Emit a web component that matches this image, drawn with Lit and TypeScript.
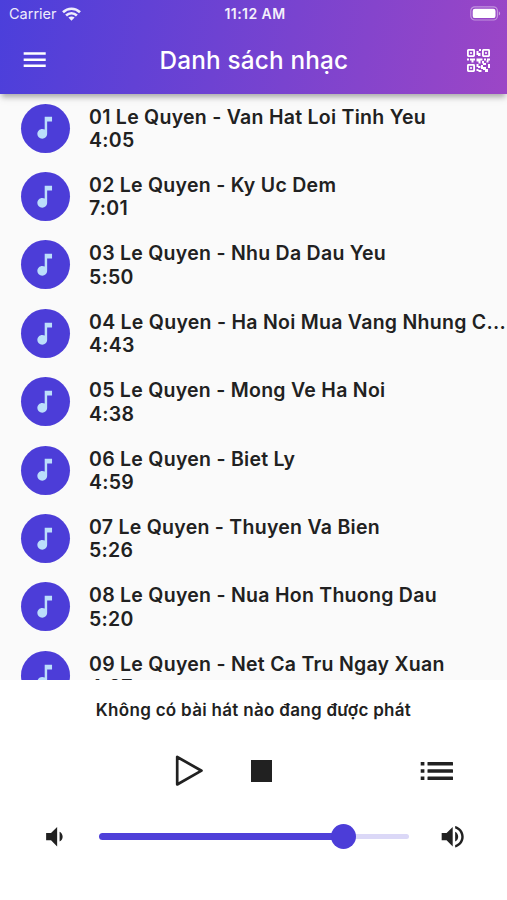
import { LitElement, html, css, svg } from "lit";
import { customElement, property, state } from "lit/decorators.js";

interface Song {
  title: string;
  time: string;
}

const SONGS: Song[] = [
  { title: "01 Le Quyen - Van Hat Loi Tinh Yeu", time: "4:05" },
  { title: "02 Le Quyen - Ky Uc Dem", time: "7:01" },
  { title: "03 Le Quyen - Nhu Da Dau Yeu", time: "5:50" },
  { title: "04 Le Quyen - Ha Noi Mua Vang Nhung C...", time: "4:43" },
  { title: "05 Le Quyen - Mong Ve Ha Noi", time: "4:38" },
  { title: "06 Le Quyen - Biet Ly", time: "4:59" },
  { title: "07 Le Quyen - Thuyen Va Bien", time: "5:26" },
  { title: "08 Le Quyen - Nua Hon Thuong Dau", time: "5:20" },
  { title: "09 Le Quyen - Net Ca Tru Ngay Xuan", time: "4:27" },
];

const PATHS = {
  menu: "M3 18h18v-2H3v2zm0-5h18v-2H3v2zm0-7v2h18V6H3z",
  note: "M12 3v10.55c-.59-.34-1.27-.55-2-.55-2.21 0-4 1.79-4 4s1.79 4 4 4 4-1.79 4-4V7h4V3h-6z",
  volumeDown: "M18.5 12c0-1.77-1.02-3.29-2.5-4.03v8.05c1.48-.73 2.5-2.25 2.5-4.02zM5 9v6h4l5 5V4L9 9H5z",
  volumeUp:
    "M3 9v6h4l5 5V4L7 9H3zm13.5 3c0-1.77-1.02-3.29-2.5-4.03v8.05c1.48-.73 2.5-2.25 2.5-4.02zM14 3.23v2.06c2.89.86 5 3.54 5 6.71s-2.11 5.85-5 6.71v2.06c4.01-.91 7-4.49 7-8.77s-2.99-7.86-7-8.77z",
};

const icon = (path: string) => html`<svg class="icon" viewBox="0 0 24 24"><path d=${path} /></svg>`;

const finder = (x: number, y: number) => svg`
  <rect x=${x + 0.9} y=${y + 0.9} width="6.2" height="6.2" rx=".5" fill="none" stroke="currentColor" stroke-width="1.8" />
  <rect x=${x + 3.2} y=${y + 3} width="1.6" height="2" fill="currentColor" />`;

@customElement("song-row")
export class SongRow extends LitElement {
  static styles = css`
    :host {
      display: flex;
      flex: none;
      align-items: center;
      height: 68.4px;
      padding-left: 20.5px;
      gap: 19.5px;
      box-sizing: border-box;
    }
    .avatar {
      flex: none;
      width: 49px;
      height: 49px;
      border-radius: 50%;
      background: #4c3dd8;
      display: grid;
      place-items: center;
    }
    .icon {
      width: 29.4px;
      height: 29.4px;
      fill: #bbdefb;
    }
    .text {
      font-size: 19.5px;
      line-height: 23.4px;
      font-weight: 640;
      letter-spacing: 0.27px;
      color: #212121;
      white-space: nowrap;
      padding-top: 1.6px;
    }
  `;
  @property({ attribute: false }) song!: Song;

  render() {
    return html`
      <div class="avatar">${icon(PATHS.note)}</div>
      <div class="text">
        <div>${this.song.title}</div>
        <div>${this.song.time}</div>
      </div>
    `;
  }
}

@customElement("app-root")
export class AppRoot extends LitElement {
  static styles = css`
    :host {
      display: flex;
      flex-direction: column;
      height: 900px;
      width: 507px;
      overflow: hidden;
      background: #fff;
      font-family: Inter, "Liberation Sans", sans-serif;
    }
    svg {
      display: block;
    }
    .icon {
      width: 29.4px;
      height: 29.4px;
      fill: currentColor;
    }
    .header {
      flex: none;
      height: 94px;
      box-sizing: border-box;
      color: #fff;
      background: linear-gradient(100.5deg, #4b3fdb, #9c46c6);
      box-shadow: 0 5px 5px -2px rgba(0, 0, 0, 0.24), 0 3px 9px rgba(0, 0, 0, 0.12);
      z-index: 1;
    }
    .status {
      height: 27px;
      display: grid;
      grid-template-columns: 1fr auto 1fr;
      align-items: center;
      padding: 0 6px 0 9px;
      font-size: 14.5px;
      line-height: 20px;
    }
    .carrier {
      display: flex;
      align-items: center;
      gap: 5.5px;
      opacity: 0.9;
    }
    .clock {
      font-weight: 600;
      font-size: 14px;
      letter-spacing: 0.45px;
      opacity: 0.92;
    }
    .battery {
      justify-self: end;
    }
    .bar {
      height: 66px;
      display: grid;
      grid-template-columns: 1fr auto 1fr;
      align-items: center;
      padding: 0 17.5px 0 20.3px;
    }
    .title {
      font-size: 24.3px;
      font-weight: 450;
      letter-spacing: 0.2px;
      margin-left: -2px;
    }
    .qr {
      justify-self: end;
    }
    .list {
      height: 586px;
      overflow: hidden;
      background: #fafafa;
      display: flex;
      flex-direction: column;
    }
    .player {
      flex: 1;
      background: #fff;
      color: #212121;
    }
    .now {
      height: 59px;
      line-height: 60.6px;
      text-align: center;
      font-size: 17px;
      font-weight: 620;
      letter-spacing: 0.3px;
    }
    .controls {
      height: 64px;
      display: flex;
      align-items: center;
      padding: 0 54px 0 173.5px;
    }
    .stop {
      width: 21.5px;
      height: 21.5px;
      background: #212121;
      margin-left: 47px;
    }
    .queue {
      margin-left: auto;
    }
    .volume {
      height: 67px;
      display: flex;
      align-items: center;
      padding: 0 39.5px 0 40px;
    }
    .slider {
      flex: 1;
      margin: 0 29.5px 0 29.6px;
      display: flex;
      align-items: center;
    }
    .filled {
      height: 7px;
      border-radius: 4px 0 0 4px;
      background: #4f40d9;
    }
    .thumb {
      flex: none;
      width: 25px;
      height: 25px;
      border-radius: 50%;
      background: #4c3dd8;
      margin: 0 -12.5px;
      z-index: 1;
    }
    .rest {
      flex: 1;
      height: 4.5px;
      border-radius: 0 3px 3px 0;
      background: #dbd8f7;
    }
  `;

  @state() private level = 79;

  render() {
    return html`
      <div class="header">
        <div class="status">
          <div class="carrier">
            <span>Carrier</span>
            <svg width="19" height="14" viewBox="0 0 19 14">
              <g fill="none" stroke="#fff" stroke-width="2.6">
                <path d="M1 5.2C5.8.5 13.2.5 18 5.2" />
                <path d="M4.1 8.5c3.1-3 7.7-3 10.8 0" />
              </g>
              <path d="M6.4 10.6c1.8-1.6 4.4-1.6 6.2 0L9.500 13.800z" fill="#fff" />
            </svg>
          </div>
          <div class="clock">11:12 AM</div>
          <svg class="battery" width="31" height="15" viewBox="0 0 31 15">
            <rect x=".8" y=".8" width="26.6" height="13.2" rx="4" fill="none" stroke="#fff" stroke-opacity=".42" stroke-width="1.2" />
            <rect x="2.7" y="2.7" width="22.8" height="9.4" rx="2.2" fill="#fff" />
            <path d="M28.8 5.2c1.8.8 1.8 3.6 0 4.4z" fill="#fff" fill-opacity=".5" />
          </svg>
        </div>
        <div class="bar">
          ${icon(PATHS.menu)}
          <div class="title">Danh sách nhạc</div>
          <svg class="qr" width="23" height="23" viewBox="0 0 23 23">
            ${finder(0, 0)}${finder(15, 0)}${finder(0, 15)}
            <path
              fill="currentColor"
              d="M12 0h2v2h-2zM9.5 2h2v2h2v3h-2.500v-1h-1.500zM0 9.500h2v2h-2zM3 9.500h5v2h-1.500v2h-2v-2h-1.500zM9.500 9.500h6v2h-2v3h-2v-2h-2zM17 9.500h2v2h-2zM20 9.500h3v2h-1.500v2h-2v-2h.5zM15 12h2v2h2v2h-3v-1.500h-1zM9.500 15h2v2h2v2h-2.500v-1h-1.500zM21 15h2v4h-2zM14 16h2v2h3v2h2v3h-3v-2h-2v-1h-2zM9.500 20h2v1h3v2h-3v-1h-2z"
            />
          </svg>
        </div>
      </div>
      <div class="list">${SONGS.map((s) => html`<song-row .song=${s}></song-row>`)}</div>
      <div class="player">
        <div class="now">Không có bài hát nào đang được phát</div>
        <div class="controls">
          <svg width="30" height="34" viewBox="0 0 30 34">
            <path d="M3.200 3v27.500L27.500 16.700z" fill="none" stroke="#212121" stroke-width="2.7" stroke-linejoin="round" />
          </svg>
          <div class="stop"></div>
          <svg class="queue" width="33" height="20" viewBox="0 0 33 20" fill="#212121">
            <path d="M.7 1h3.700v3.500H.7zM.7 8.200h3.700v3.500H.7zM.7 15.400h3.700v3.500H.7z" />
            <rect x="7.500" y="1" width="25.500" height="3.600" rx=".5" />
            <rect x="7.500" y="8.200" width="25.500" height="3.600" rx=".5" />
            <rect x="7.500" y="15.400" width="25.500" height="3.600" rx=".5" />
          </svg>
        </div>
        <div class="volume">
          ${icon(PATHS.volumeDown)}
          <div class="slider">
            <div class="filled" style="width: ${this.level}%"></div>
            <div class="thumb"></div>
            <div class="rest"></div>
          </div>
          ${icon(PATHS.volumeUp)}
        </div>
      </div>
    `;
  }
}
